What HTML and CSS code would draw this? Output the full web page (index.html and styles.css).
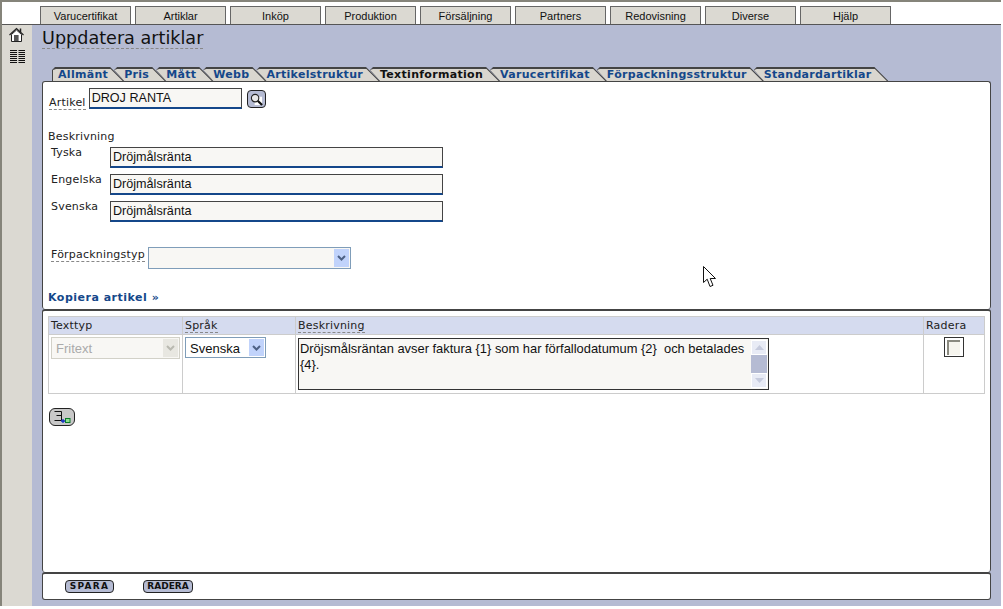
FILE: index.html
```html
<!DOCTYPE html>
<html lang="sv">

<head>
    <meta charset="UTF-8">
    <title>Uppdatera artiklar</title>
    <link rel="stylesheet" href="styles.css">
</head>

<body>
    <div class="window">
        <nav class="topnav">
            <a class="topnav-item">Varucertifikat</a>
            <a class="topnav-item">Artiklar</a>
            <a class="topnav-item">Inköp</a>
            <a class="topnav-item">Produktion</a>
            <a class="topnav-item">Försäljning</a>
            <a class="topnav-item">Partners</a>
            <a class="topnav-item">Redovisning</a>
            <a class="topnav-item">Diverse</a>
            <a class="topnav-item">Hjälp</a>
        </nav>

        <div class="content">
            <aside class="sidebar">
                <svg class="home-icon" width="15" height="15" viewBox="0 0 15 15">
                    <path d="M.5 8 L7.5 1.5 L14.5 8" fill="none" stroke="#222" stroke-width="1.2" />
                    <path d="M11.5 1.5v3.5" stroke="#222" stroke-width="1.5" />
                    <path d="M2.5 7.5 L7.5 3 L12.5 7.5 V14.5 H2.5 Z" fill="#fff" stroke="#222" />
                    <rect x="5" y="8" width="4" height="6" fill="#555" />
                    <path d="M9.5 8v6" stroke="#999" />
                </svg>
                <svg class="list-icon" width="15" height="13" viewBox="0 0 15 13">
                    <path d="M0 .5h7M8.5 .5h6.5M0 2.5h7M8.5 2.5h6.5M0 4.5h7M8.5 4.5h6.5M0 6.5h7M8.5 6.5h6.5M0 8.5h7M8.5 8.5h6.5M0 10.5h7M8.5 10.5h6.5M0 12.5h7M8.5 12.5h6.5" stroke="#111" />
                </svg>
            </aside>

            <main class="main">
                <h1 class="page-title"><span>Uppdatera artiklar</span></h1>

                <div class="tabs">
                    <a class="tab first"><span>Allmänt</span></a>
                    <a class="tab"><span>Pris</span></a>
                    <a class="tab"><span>Mått</span></a>
                    <a class="tab"><span>Webb</span></a>
                    <a class="tab"><span>Artikelstruktur</span></a>
                    <a class="tab active"><span>Textinformation</span></a>
                    <a class="tab"><span>Varucertifikat</span></a>
                    <a class="tab"><span>Förpackningsstruktur</span></a>
                    <a class="tab"><span>Standardartiklar</span></a>
                </div>

                <section class="panel panel-form">
                    <div class="article-row">
                        <label class="hint">Artikel</label>
                        <input class="text-input article-input" value="DROJ RANTA">
                        <button class="search-btn">
                            <svg width="13" height="13" viewBox="0 0 14 14">
                                <rect x="5" y="4" width="8" height="9" fill="#fff" />
                                <path d="M8 8 L13 13" stroke="#111" stroke-width="2.4" />
                                <circle cx="5.5" cy="5.5" r="4" fill="#e8e8e8" stroke="#222" stroke-width="1.2" />
                            </svg>
                        </button>
                    </div>

                    <div class="desc-title">Beskrivning</div>
                    <div class="desc-rows">
                        <label>Tyska</label>
                        <input class="text-input" value="Dröjmålsränta">
                        <label>Engelska</label>
                        <input class="text-input" value="Dröjmålsränta">
                        <label>Svenska</label>
                        <input class="text-input" value="Dröjmålsränta">
                    </div>

                    <div class="package-row">
                        <label class="hint">Förpackningstyp</label>
                        <div class="select package-select">
                            <span class="select-value"></span>
                            <span class="select-btn">
                                <svg width="9" height="6" viewBox="0 0 9 6"><path d="M1 1l3.5 3.5L8 1" fill="none" stroke="#4d6185" stroke-width="2" /></svg>
                            </span>
                        </div>
                    </div>

                    <a class="copy-link">Kopiera artikel »</a>
                </section>

                <section class="panel panel-texts">
                    <table class="text-table">
                        <thead>
                            <tr>
                                <th class="col-type">Texttyp</th>
                                <th class="col-lang"><span class="hint">Språk</span></th>
                                <th><span class="hint">Beskrivning</span></th>
                                <th class="col-del">Radera</th>
                            </tr>
                        </thead>
                        <tbody>
                            <tr>
                                <td>
                                    <div class="select type-select disabled">
                                        <span class="select-value">Fritext</span>
                                        <span class="select-btn">
                                            <svg width="9" height="6" viewBox="0 0 9 6"><path d="M1 1l3.5 3.5L8 1" fill="none" stroke="#b9b9b0" stroke-width="2" /></svg>
                                        </span>
                                    </div>
                                </td>
                                <td>
                                    <div class="select lang-select">
                                        <span class="select-value">Svenska</span>
                                        <span class="select-btn">
                                            <svg width="9" height="6" viewBox="0 0 9 6"><path d="M1 1l3.5 3.5L8 1" fill="none" stroke="#4d6185" stroke-width="2" /></svg>
                                        </span>
                                    </div>
                                </td>
                                <td>
                                    <div class="textbox">
                                        <div class="textbox-text">Dröjsmålsräntan avser faktura {1} som har förfallodatumum {2}&nbsp; och betalades {4}.</div>
                                        <div class="scrollbar">
                                            <span class="scroll-btn"><svg width="9" height="5" viewBox="0 0 9 5"><path d="M0 5L4.5 0L9 5Z" fill="#c6cbdd" /></svg></span>
                                            <span class="scroll-thumb"></span>
                                            <span class="scroll-btn"><svg width="9" height="5" viewBox="0 0 9 5"><path d="M0 0L4.5 5L9 0Z" fill="#c6cbdd" /></svg></span>
                                        </div>
                                    </div>
                                </td>
                                <td class="cell-del"><span class="checkbox"></span></td>
                            </tr>
                        </tbody>
                    </table>

                    <button class="add-btn">
                        <svg width="20" height="14" viewBox="0 0 20 14">
                            <path d="M2.5 1.5h7v9h-7M4.5 5.5h5" fill="none" stroke="#111" />
                            <path d="M9 11h5M11 9v4" stroke="#1030c0" stroke-width="1.3" />
                            <rect x="13.5" y="8.5" width="4.5" height="4" fill="#8fe08f" stroke="#0a7a2a" />
                        </svg>
                    </button>
                </section>

                <section class="panel panel-actions">
                    <button class="action-btn save-btn">SPARA</button>
                    <button class="action-btn">RADERA</button>
                </section>
            </main>
        </div>
    </div>

    <svg class="cursor" width="14" height="22" viewBox="0 0 14 22">
        <path d="M.5 .5V16.5L4.2 13.2L7 20.5L10 19.3L7.2 12.5H12.5Z" fill="#fff" stroke="#111" />
    </svg>
</body>

</html>
```

FILE: styles.css
```css
* {
    box-sizing: border-box;
}

body {
    margin: 0;
    background: #fff;
    font-family: "DejaVu Sans", sans-serif;
    font-size: 11px;
    letter-spacing: .2px;
    color: #222;
}

.window {
    width: 1001px;
    height: 606px;
    display: flex;
    flex-direction: column;
    border-top: 2px solid #85847a;
    border-left: 2px solid #85847a;
}

/* top menu */
.topnav {
    display: flex;
    gap: 4px;
    height: 23px;
    padding: 4px 0 0 38px;
    border-bottom: 1px solid #555;
    background: #fff;
}

.topnav-item {
    width: 91px;
    border: 1px solid #666;
    border-bottom: 0;
    background: #dbd9d2;
    font-family: "Liberation Sans", sans-serif;
    font-size: 11px;
    letter-spacing: 0;
    line-height: 18px;
    text-align: center;
    color: #111;
}

.content {
    flex: 1;
    display: flex;
    min-height: 0;
}

.sidebar {
    width: 30px;
    display: flex;
    flex-direction: column;
    align-items: center;
    gap: 8px;
    padding-top: 2px;
    background: #dbd9d2;
}

.home-icon,
.list-icon {
    display: block;
}

.home-icon {
    margin-right: 2px;
}

.main {
    flex: 1;
    display: flex;
    flex-direction: column;
    padding: 0 10px 6px 10px;
    background: #b5bbd3;
}

.page-title {
    height: 42px;
    margin: 0;
    padding-top: 3px;
    font-size: 17.6px;
    font-weight: normal;
    letter-spacing: 0;
    line-height: 20px;
    color: #111;
}

.page-title span {
    display: inline-block;
    height: 21px;
    border-bottom: 1px dashed #888;
}

/* tabs: the left edge of a tab follows the slanted edge of the one before */
.tabs {
    display: flex;
    height: 14px;
    padding-left: 10px;
}

.tab {
    height: 14px;
    margin-left: -10px;
    background: #444;
    clip-path: polygon(10px 100%, 0 3px, 3px 0, calc(100% - 14px) 0, 100% 100%);
}

.tab.first {
    margin-left: 0;
    clip-path: polygon(0 100%, 0 3px, 3px 0, calc(100% - 14px) 0, 100% 100%);
}

.tab span {
    display: block;
    height: 14px;
    padding: 1px 17px 0 10px;
    background: #d9d6cf;
    clip-path: polygon(10px 100%, 0 3px, 3px 2px, calc(100% - 13.5px) 2px, calc(100% - 1.5px) 100%);
    font-size: 11px;
    font-weight: bold;
    letter-spacing: .3px;
    line-height: 13px;
    color: #14478a;
    white-space: nowrap;
}

.tab.first span {
    padding: 1px 16px 0 6px;
    clip-path: polygon(1px 100%, 1px 3px, 4px 2px, calc(100% - 13.5px) 2px, calc(100% - 1.5px) 100%);
}

.tab.active span {
    color: #111;
}

/* panels */
.panel {
    background: #fff;
    border: 1px solid #444;
    border-radius: 3px;
}

.panel-form {
    height: 228px;
    border-bottom: 0;
    padding: 6px 5px 0 5px;
}

.panel-texts {
    height: 263px;
    border-top-width: 2px;
    border-bottom: 0;
    padding: 5px 3px 0 5px;
}

.panel-actions {
    height: 28px;
    border-top-width: 2px;
    padding: 6px 0 0 22px;
    display: flex;
    align-items: flex-start;
    gap: 29px;
}

.hint {
    border-bottom: 1px dashed #888;
}

.text-input {
    height: 21px;
    padding: 0 2px 1px;
    border: 1px solid #444;
    border-bottom: 2px solid #14478a;
    border-radius: 0;
    outline: 0;
    background: #f8f7f4;
    font-family: "Liberation Sans", sans-serif;
    font-size: 12.6px;
    color: #111;
}

.article-row {
    display: flex;
    align-items: flex-start;
    gap: 3px;
}

.article-row .hint {
    margin: 8px 0 0 1px;
    line-height: 13px;
}

.article-input {
    width: 153px;
}

.search-btn {
    width: 19px;
    height: 18px;
    margin: 2px 0 0 2px;
    padding: 0;
    border: 1px solid #222;
    border-radius: 4px;
    background: #b5bbd3;
    display: flex;
    align-items: center;
    justify-content: center;
}

.desc-title {
    margin-top: 20px;
    line-height: 14px;
}

.desc-rows {
    display: grid;
    grid-template-columns: 59px 333px;
    row-gap: 6px;
    margin-top: 3px;
    margin-left: 3px;
}

.desc-rows label {
    margin-top: -1px;
    line-height: 13px;
}

.package-row {
    display: flex;
    align-items: flex-start;
    gap: 3px;
    margin-top: 25px;
    margin-left: 3px;
}

.package-row .hint {
    margin-top: 1px;
    line-height: 13px;
}

.select {
    display: flex;
    justify-content: space-between;
    padding: 1px;
    border: 1px solid #7f9db9;
    background: #f8f7f4;
    font-family: "Liberation Sans", sans-serif;
    font-size: 13px;
    letter-spacing: 0;
    color: #111;
}

.select-value {
    padding-left: 3px;
    line-height: 19px;
}

.select-btn {
    width: 15px;
    background: #c1d3fb;
    display: flex;
    align-items: center;
    justify-content: center;
}

.package-select {
    width: 203px;
    height: 22px;
}

.copy-link {
    display: block;
    margin-top: 22px;
    font-weight: bold;
    letter-spacing: .5px;
    line-height: 14px;
    color: #14478a;
}

/* text table */
.text-table {
    width: 937px;
    border-collapse: collapse;
    table-layout: fixed;
}

.text-table th {
    height: 18px;
    padding: 0 2px;
    border: 1px solid #ccc;
    background: #d5dbef;
    font-weight: normal;
    text-align: left;
    line-height: 13px;
}

.text-table td {
    height: 59px;
    padding: 2px;
    border: 1px solid #ccc;
    vertical-align: top;
}

.col-type {
    width: 134px;
}

.col-lang {
    width: 113px;
}

.col-del {
    width: 61px;
}

.type-select {
    width: 129px;
    height: 22px;
}

.select.disabled {
    border-color: #d2d1c8;
    color: #aaa;
}

.select.disabled .select-btn {
    background: #e8e7e1;
}

.lang-select {
    width: 81px;
    height: 21px;
    background: #fff;
}

.textbox {
    display: flex;
    width: 471px;
    height: 52px;
    margin-top: 1px;
    border: 1px solid #333;
    background: #f8f7f4;
}

.textbox-text {
    flex: 1;
    padding: 2px 1px;
    font-family: "Liberation Sans", sans-serif;
    font-size: 12.9px;
    letter-spacing: 0;
    line-height: 16px;
    color: #111;
}

.scrollbar {
    width: 17px;
    padding: 1px 1px 1px 0;
    display: flex;
    flex-direction: column;
}

.scroll-btn {
    height: 15px;
    border: 1px solid #fff;
    background: #e8ebf5;
    display: flex;
    align-items: center;
    justify-content: center;
}

.scroll-thumb {
    flex: 1;
    background: #b5bbd3;
}

.cell-del {
    text-align: center;
}

.checkbox {
    display: block;
    width: 20px;
    height: 20px;
    margin: 0 auto;
    padding: 2px 3px 3px 2px;
    border: 1px solid #333;
    background: #fff;
}

.checkbox::after {
    content: "";
    display: block;
    height: 100%;
    border-top: 2px solid #8a8a80;
    border-left: 2px solid #8a8a80;
    background: #f6f5ee;
}

.add-btn {
    display: flex;
    align-items: center;
    justify-content: center;
    width: 26px;
    height: 18px;
    margin: 14px 0 0 1px;
    padding: 0;
    border: 1px solid #222;
    border-radius: 6px;
    background: #c8c8c8;
}

.action-btn {
    width: 50px;
    height: 13px;
    padding: 0;
    border: 1px solid #222;
    border-radius: 4px;
    background: #b5bbd3;
    font-family: "DejaVu Sans", sans-serif;
    font-size: 9px;
    font-weight: bold;
    line-height: 11px;
    color: #111;
}

.save-btn {
    width: 49px;
    letter-spacing: 1.3px;
}

.cursor {
    position: absolute;
    left: 703px;
    top: 266px;
}
```
